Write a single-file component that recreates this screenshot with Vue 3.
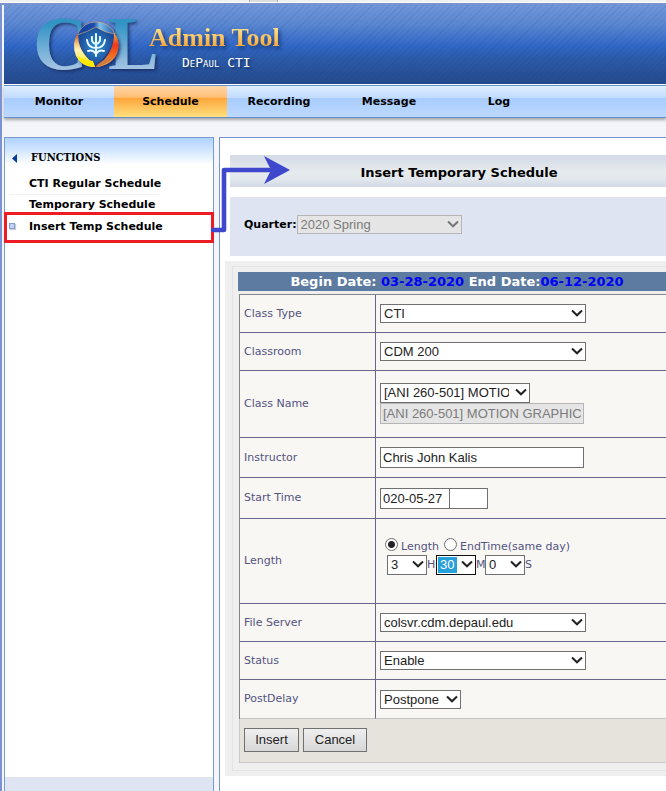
<script setup>
import { ref } from 'vue'

const tabs = ['Monitor', 'Schedule', 'Recording', 'Message', 'Log']
const activeTab = ref('Schedule')
const functions = ['CTI Regular Schedule', 'Temporary Schedule', 'Insert Temp Schedule']
const activeFunction = ref('Insert Temp Schedule')
const mode = ref('length')
const parts = [
  { id: 'hours', value: '3', unit: 'H' },
  { id: 'minutes', value: '30', unit: 'M', active: true },
  { id: 'seconds', value: '0', unit: 'S' }
]
</script>

<template>
  <div class="window">
    <div class="chrome"><i class="chrome-tab"></i></div>
    <div class="page">
      <header class="banner">
        <svg class="logo" viewBox="0 0 122 66" aria-hidden="true">
          <defs>
            <linearGradient id="letter" gradientUnits="userSpaceOnUse" x1="0" y1="4" x2="0" y2="56">
              <stop offset="0.1" stop-color="#3394c4" />
              <stop offset="1" stop-color="#a9c6e5" />
            </linearGradient>
            <linearGradient id="ringTop" x1="0" y1="0" x2="1" y2="0">
              <stop offset="0" stop-color="#173f9c" />
              <stop offset="0.45" stop-color="#1a4cae" />
              <stop offset="0.6" stop-color="#7cc4ee" />
              <stop offset="1" stop-color="#1c55a8" />
            </linearGradient>
            <linearGradient id="ringLeft" x1="0" y1="0" x2="0" y2="1">
              <stop offset="0" stop-color="#b9482a" />
              <stop offset="0.3" stop-color="#f6c07a" />
              <stop offset="0.5" stop-color="#fff2b8" />
              <stop offset="1" stop-color="#ffe900" />
            </linearGradient>
            <linearGradient id="ringRight" x1="0" y1="0" x2="0" y2="1">
              <stop offset="0" stop-color="#ffb23b" />
              <stop offset="0.35" stop-color="#ee3718" />
              <stop offset="0.65" stop-color="#f26a1c" />
              <stop offset="1" stop-color="#f7b04a" />
            </linearGradient>
            <radialGradient id="core">
              <stop offset="0" stop-color="#2f8fd6" />
              <stop offset="1" stop-color="#1d4c96" />
            </radialGradient>
            <filter id="drop" x="-20%" y="-20%" width="150%" height="150%">
              <feDropShadow dx="2" dy="2" stdDeviation="1.5" flood-color="#132c62" flood-opacity="0.8" />
            </filter>
          </defs>
          <g filter="url(#drop)" class="logo-letters" fill="url(#letter)">
            <text x="-2" y="54">C</text>
            <text x="73" y="54">L</text>
          </g>
          <g filter="url(#drop)">
            <path d="M44 18Q52 16 61 12Q70 16 78 18Q80 35 61 50Q42 35 44 18Z" fill="url(#core)" />
            <path d="M42 20Q48 7 61 7Q74 7 80 19Q70 18 61 12Q52 17 42 20Z" fill="url(#ringTop)" stroke="#e8b27a" stroke-width="0.6" />
            <path d="M43 18Q42 36 59 49L58 52Q46 51 41 41Q36 28 43 18Z" fill="url(#ringLeft)" />
            <path d="M79 18Q86 27 82 38Q78 49 62 52Q80 37 79 18Z" fill="url(#ringRight)" />
            <path d="M42 41Q48 45 58 46L60 52Q47 52 42 41Z" fill="#ffe900" />
            <path d="M60 52Q68 44 78 41Q74 50 60 52Z" fill="#d07a3c" />
          </g>
          <path d="M61 19V41M52 25Q53 33 61 33Q69 33 70 25M57 22Q56 28 61 29Q66 28 65 22M53 36Q58 34 61 39Q64 34 69 36" fill="none" stroke="#e8faff" stroke-width="2" stroke-linecap="round" />
        </svg>
        <div class="brand">
          <span class="brand-name">Admin Tool</span>
          <span class="brand-sub">DePaul CTI</span>
        </div>
      </header>

      <nav class="tabs">
        <a v-for="tab in tabs" :key="tab" href="#" :class="{ active: tab === activeTab }" @click.prevent="activeTab = tab">{{ tab }}</a>
      </nav>

      <div class="columns">
        <aside class="sidebar">
          <h2><svg width="5" height="9" viewBox="0 0 5 9"><path d="M5 0V9L0 4.5Z" fill="#003c9c" /></svg>FUNCTIONS</h2>
          <ul>
            <li v-for="item in functions" :key="item" :class="{ current: item === activeFunction }">
              <i v-if="item === activeFunction" class="bullet"></i>
              <a href="#" @click.prevent="activeFunction = item">{{ item }}</a>
              <svg v-if="item === activeFunction" class="pointer" width="82" height="86" viewBox="0 0 82 86" aria-hidden="true">
                <path d="M4 75H15V15H60" fill="none" stroke="#3f48cc" stroke-width="4.6" stroke-linecap="round" stroke-linejoin="round" />
                <path d="M55 1L81 15L55 29L62 15Z" fill="#3f48cc" />
              </svg>
            </li>
          </ul>
          <div class="sidebar-foot"></div>
        </aside>

        <main class="content">
          <h1>Insert Temporary Schedule</h1>
          <div class="quarter">
            <label for="quarter">Quarter:</label>
            <span class="pick quarter-pick">
              <select id="quarter" disabled><option>2020 Spring</option></select>
              <svg viewBox="0 0 12 8"><path d="M1 1.5L6 6.3L11 1.5" /></svg>
            </span>
          </div>

          <form class="panel" @submit.prevent>
            <div class="panel-inner">
              <div class="dates">Begin Date: <b>03-28-2020</b> End Date:<b>06-12-2020</b></div>
              <table>
                <tbody>
                  <tr>
                    <th><label for="type">Class Type</label></th>
                    <td><span class="pick wide"><select id="type"><option>CTI</option></select><svg viewBox="0 0 12 8"><path d="M1 1.5L6 6.3L11 1.5" /></svg></span></td>
                  </tr>
                  <tr>
                    <th><label for="room">Classroom</label></th>
                    <td><span class="pick wide"><select id="room"><option>CDM 200</option></select><svg viewBox="0 0 12 8"><path d="M1 1.5L6 6.3L11 1.5" /></svg></span></td>
                  </tr>
                  <tr class="name-row">
                    <th><label for="class">Class Name</label></th>
                    <td>
                      <div class="stack">
                        <span class="pick medium"><select id="class"><option>[ANI 260-501] MOTION GRAPHICS</option></select><svg viewBox="0 0 12 8"><path d="M1 1.5L6 6.3L11 1.5" /></svg></span>
                        <input class="long" aria-label="Class title" disabled value="[ANI 260-501] MOTION GRAPHICS">
                      </div>
                    </td>
                  </tr>
                  <tr class="instructor-row">
                    <th><label for="instructor">Instructor</label></th>
                    <td><input id="instructor" class="long" value="Chris John Kalis"></td>
                  </tr>
                  <tr class="start-row">
                    <th><label for="date">Start Time</label></th>
                    <td><div class="pair"><input id="date" class="date" value="020-05-27"><input class="time" aria-label="Start hour"></div></td>
                  </tr>
                  <tr class="length-row">
                    <th>Length</th>
                    <td>
                      <div class="modes">
                        <input id="byLength" v-model="mode" type="radio" value="length"><label for="byLength">Length</label>
                        <input id="byEnd" v-model="mode" type="radio" value="end"><label for="byEnd">EndTime(same day)</label>
                      </div>
                      <div class="duration">
                        <template v-for="part in parts" :key="part.id">
                          <span class="pick tiny" :class="{ selected: part.active }">
                            <select :id="part.id"><option>{{ part.value }}</option></select>
                            <svg viewBox="0 0 12 8"><path d="M1 1.5L6 6.3L11 1.5" /></svg>
                          </span><label :for="part.id">{{ part.unit }}</label>
                        </template>
                      </div>
                    </td>
                  </tr>
                  <tr>
                    <th><label for="server">File Server</label></th>
                    <td><span class="pick wide"><select id="server"><option>colsvr.cdm.depaul.edu</option></select><svg viewBox="0 0 12 8"><path d="M1 1.5L6 6.3L11 1.5" /></svg></span></td>
                  </tr>
                  <tr>
                    <th><label for="status">Status</label></th>
                    <td><span class="pick wide"><select id="status"><option>Enable</option></select><svg viewBox="0 0 12 8"><path d="M1 1.5L6 6.3L11 1.5" /></svg></span></td>
                  </tr>
                  <tr>
                    <th><label for="delay">PostDelay</label></th>
                    <td><span class="pick short"><select id="delay"><option>Postpone</option></select><svg viewBox="0 0 12 8"><path d="M1 1.5L6 6.3L11 1.5" /></svg></span></td>
                  </tr>
                </tbody>
              </table>
              <div class="actions"><button type="submit">Insert</button><button type="button" class="cancel">Cancel</button></div>
            </div>
          </form>
        </main>
      </div>
    </div>
  </div>
</template>

<style>
body { margin: 0; }
</style>

<style scoped>
* { box-sizing: border-box; }
.window {
  min-height: 100vh;
  display: flex;
  flex-direction: column;
  font: 11px/14px "DejaVu Sans", Verdana, sans-serif;
  color: #000;
}
a { color: inherit; text-decoration: none; }
.chrome { height: 3px; background: #fff; border-top: 2px solid #f0f0f0; padding-left: 249px; }
.chrome-tab { display: block; width: 29px; height: 2px; margin-top: -2px; background: #dcdcdc; border: solid #aaa; border-width: 0 1px; }
.page {
  flex: 1;
  display: flex;
  flex-direction: column;
  background: #f3f5fb;
  border-left: 2px solid #7b93d3;
  border-top: 2px solid #7b93cb;
  padding-left: 2px;
}
.banner {
  height: 79px;
  display: flex;
  align-items: flex-start;
  padding: 10px 0 0 31px;
  background:
    repeating-linear-gradient(135deg, rgba(20, 50, 110, .09) 0 1px, transparent 1px 4px),
    linear-gradient(#7196d9, #5a86d0 25%, #3067c7 52%, #2b5aa7 68%, #25498d);
}
.logo { width: 122px; height: 66px; margin-right: -8px; overflow: visible; }
.logo-letters { font: bold 76px "Liberation Serif", serif; }
.brand { display: flex; flex-direction: column; position: relative; }
.brand-name {
  font: bold 26px/32px "Liberation Serif", serif;
  margin-top: 7px;
  background: linear-gradient(#ffe08a 20%, #f8aa3c 75%);
  background-clip: text;
  color: transparent;
  filter: drop-shadow(2px 3px 2px #173a78);
}
.brand-sub {
  font: small-caps 13px/18px "DejaVu Sans Mono", monospace;
  color: #fff;
  padding-left: 33px;
  text-shadow: 2px 2px 2px #17366f;
}
.tabs {
  display: grid;
  grid-template-columns: 110px 113px 104px 116px 104px;
  height: 33px;
  margin-top: 1px;
  background: linear-gradient(#dfeeff, #c2dcff 38%, #a9cdff 40%, #bcd8ff);
  border: solid #6690cb;
  border-width: 1px 0;
  box-shadow: 0 -1px #fff, 0 2px 3px #a5a5a5;
  font-weight: bold;
}
.tabs a { display: flex; align-items: center; justify-content: center; }
.tabs .active { background: linear-gradient(#ffd6a5, #ffbf79 36%, #ffa63b 40%, #ffe07f); }
.columns { flex: 1; display: grid; grid-template-columns: 210px minmax(0, 1fr); gap: 5px; padding-top: 19px; }
.sidebar {
  display: flex;
  flex-direction: column;
  border: solid #7b9bcf;
  border-width: 1px 1px 0;
  background: linear-gradient(#aed2ff, #fff 27px);
}
.sidebar h2 {
  display: flex;
  align-items: center;
  gap: 14px;
  margin: 0;
  padding: 12px 0 0 7px;
  font: bold 11px/16px "DejaVu Serif Condensed", "DejaVu Serif", serif;
}
.sidebar h2 svg { flex: none; }
.sidebar ul { flex: 1; list-style: none; margin: 0; padding: 8px 0 0; font-weight: bold; }
.sidebar li { position: relative; height: 21px; padding: 3px 0 0 24px; line-height: 14px; }
.sidebar li:first-child { background: linear-gradient(90deg, #f2f2f2, #f2f2f2) 4px 100% / 150px 1px no-repeat; }
.sidebar li.current { height: 31px; margin: -4px -1px 0; padding: 5px 0 0 22px; border: 3px solid #ed1c24; }
.bullet { position: absolute; left: 2px; top: 8px; width: 6px; height: 6px; border: 1px solid #819edb; background: #c2d3f8; box-shadow: 1px 1px 1px #ccc; }
.pointer { position: absolute; left: 202px; top: -60px; z-index: 2; }
.sidebar-foot { height: 14px; background: #dee4f2; }
.content { border: solid #7b93cb; border-width: 1px 0 0 1px; background: #fff; padding: 17px 0 15px 5px; overflow: clip; }
h1 {
  margin: 0 0 0 5px;
  padding-left: 22px;
  font-size: 13px;
  line-height: 35px;
  height: 32px;
  text-align: center;
  background: linear-gradient(#d3dae7, #e5eaee 50%, #e4e9ed 70%, #d3dae7);
}
.quarter {
  margin: 10px 0 5px 5px;
  height: 59px;
  padding: 0 0 4px 14px;
  display: flex;
  align-items: center;
  background: #dee4f2;
  font-weight: bold;
}
.panel { background: #efefef; padding: 5px 0 5px 7px; }
.panel-inner { border: solid #e3e3e3; border-width: 1px 0 1px 1px; padding: 5px 0 7px 6px; }
.dates {
  margin-left: -1px;
  margin-bottom: 3px;
  padding: 1px 0 0 10px;
  font: bold 13px/18px "DejaVu Sans", Verdana, sans-serif;
  color: #fff;
  text-align: center;
  background: #5d7ba0;
}
.dates b { color: #0000f5; }
table { width: 100%; border-spacing: 0; border: solid #858585; border-width: 1px 0 0 1px; background: #f8f7f4; color: #54547f; table-layout: fixed; }
th, td { height: 38px; padding: 0 4px; border-bottom: 1px solid #68678a; vertical-align: middle; }
th { width: 136px; border-right: 1px solid #68678a; font-weight: normal; text-align: left; }
.name-row th { height: 67px; }
.name-row td { padding-bottom: 2px; }
.instructor-row th { height: 40px; }
.start-row th { height: 41px; }
.length-row th { height: 85px; }
.length-row td { padding-bottom: 10px; }
tr:last-child th, tr:last-child td { border-bottom-color: #c4c4c4; height: 39px; }
td > * { vertical-align: middle; }
.pick { position: relative; display: inline-block; height: 19px; }
.pick svg { position: absolute; right: 3px; top: 5px; width: 12px; height: 8px; fill: none; stroke: #222; stroke-width: 2; pointer-events: none; }
select, input { font: 13px/17px "Liberation Sans", Arial, sans-serif; color: #222; border: 1px solid #707070; border-radius: 0; background: #fff; margin: 0; outline: none; }
select { appearance: none; display: block; width: 100%; height: 100%; padding: 0 20px 0 3px; }
select:disabled, input:disabled { color: #7b7b7b; background: #e5e5e5; border-color: #b5b5b5; opacity: 1; }
select:disabled + svg { stroke: #777; }
.quarter-pick { width: 165px; font-weight: normal; }
.wide { width: 206px; }
.medium { width: 150px; height: 20px; }
.short { width: 81px; }
.tiny { width: 40px; height: 20px; }
.selected select { border-color: #111; color: #fff; background: linear-gradient(#26a0da, #26a0da) 1px 1px / 19px 16px no-repeat #fff; }
input { height: 21px; padding: 0 2px; }
.long { width: 204px; }
.date { width: 70px; }
.time { width: 39px; margin-left: -1px; }
.stack { display: flex; flex-direction: column; align-items: flex-start; }
.pair, .modes, .duration { display: flex; }
.modes { padding-left: 5px; height: 17px; align-items: flex-start; }
.modes input { appearance: none; width: 13px; height: 13px; padding: 0; border-radius: 50%; }
.modes input:checked { background: radial-gradient(#222 3px, #fff 4px); }
.modes label { line-height: 18px; margin: 0 5px 0 3px; }
.duration { padding-left: 7px; align-items: center; }
.duration label { width: 9px; }
.actions { display: flex; gap: 4px; height: 44px; padding: 9px 4px; background: #e6e3dc; border: solid #c9c9c9; border-width: 0 0 1px 1px; }
button { height: 24px; width: 55px; padding: 0; border: 1px solid #707070; border-radius: 0; background: linear-gradient(#efefef, #d7d7d7); color: #222; font: 13px/20px "Liberation Sans", Arial, sans-serif; }
.cancel { width: 64px; }
</style>
